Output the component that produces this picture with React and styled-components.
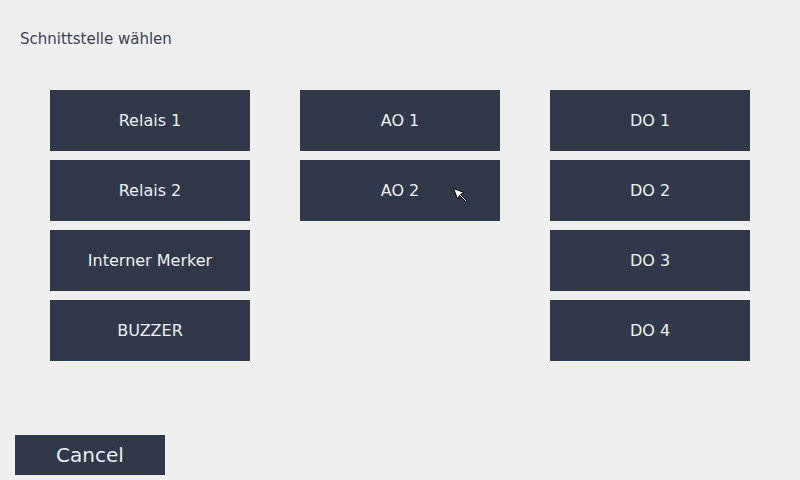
import React from 'react';
import styled, { createGlobalStyle } from 'styled-components';

const GlobalStyle = createGlobalStyle`
  html, body {
    margin: 0;
    padding: 0;
    background: #efefef;
    font-family: "DejaVu Sans", "Liberation Sans", sans-serif;
  }
`;

const Screen = styled.div`
  width: 800px;
  height: 480px;
  position: relative;
  display: flex;
  flex-direction: column;
  background: #efefef;
  overflow: hidden;
`;

const Title = styled.div`
  padding: 30px 0 0 20px;
  height: 20px;
  font-size: 15px;
  color: #3b4252;
`;

const Columns = styled.div`
  display: flex;
  gap: 50px;
  padding: 40px 0 0 50px;
  flex: 1;
`;

const Column = styled.div`
  display: flex;
  flex-direction: column;
  gap: 9px;
  width: 200px;
`;

const Tile = styled.button`
  position: relative;
  width: 200px;
  height: 61px;
  border: none;
  margin: 0;
  padding: 0;
  background: #2f394a;
  color: #eceff4;
  font-family: inherit;
  font-size: 16px;
  display: flex;
  align-items: center;
  justify-content: center;
`;

const Footer = styled.div`
  padding: 0 0 5px 15px;
`;

const CancelButton = styled.button`
  width: 150px;
  height: 40px;
  border: none;
  margin: 0;
  padding: 0;
  background: #2f394a;
  color: #eceff4;
  font-family: inherit;
  font-size: 20px;
`;

const Pointer = styled.svg`
  position: absolute;
  left: 152px;
  top: 27px;
`;

function Cursor() {
  return (
    <Pointer width="18" height="18" viewBox="0 0 18 18">
      <path
        d="M1.5 1.5 L12 5.5 L8.5 7.5 L14.5 13.5 L13.5 14.5 L7.5 8.5 L5.5 12 Z"
        fill="#fff"
        stroke="#000"
        strokeWidth="1"
        strokeLinejoin="round"
      />
    </Pointer>
  );
}

const columns = [
  ['Relais 1', 'Relais 2', 'Interner Merker', 'BUZZER'],
  ['AO 1', 'AO 2'],
  ['DO 1', 'DO 2', 'DO 3', 'DO 4'],
];

export default function App() {
  return (
    <>
      <GlobalStyle />
      <Screen>
        <Title>Schnittstelle wählen</Title>
        <Columns>
          {columns.map((col, i) => (
            <Column key={i}>
              {col.map((label) => (
                <Tile key={label}>
                  {label}
                  {label === 'AO 2' && <Cursor />}
                </Tile>
              ))}
            </Column>
          ))}
        </Columns>
        <Footer>
          <CancelButton>Cancel</CancelButton>
        </Footer>
      </Screen>
    </>
  );
}
